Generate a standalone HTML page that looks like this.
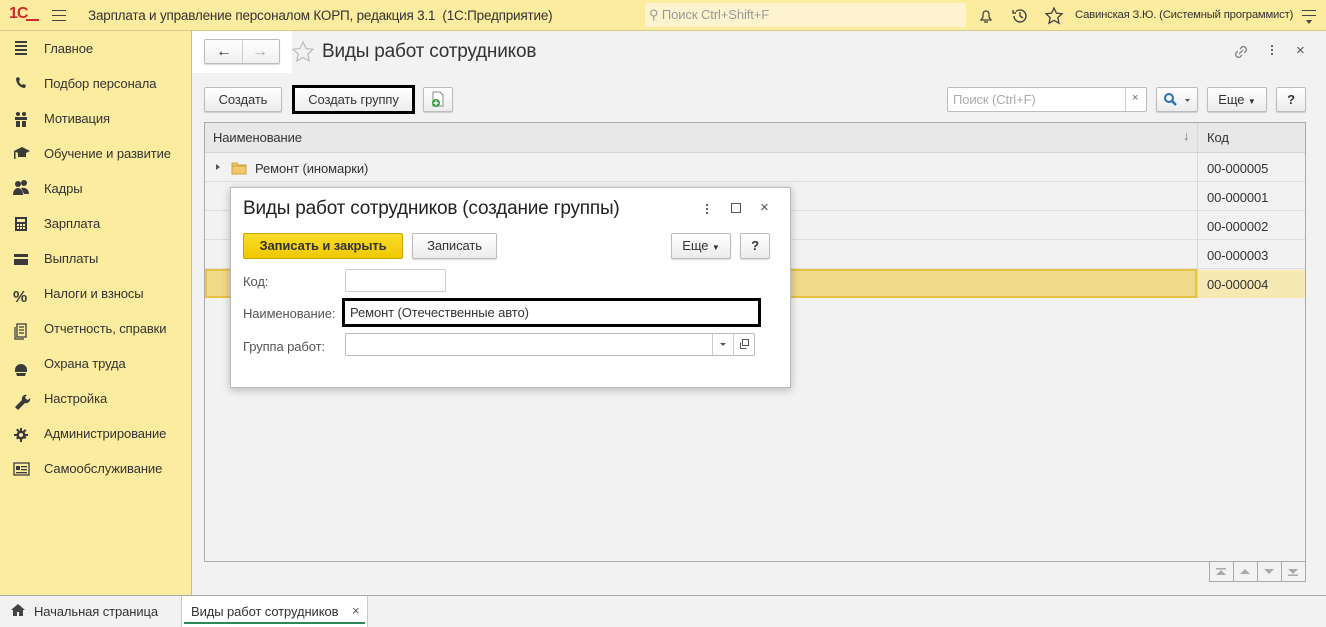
<!DOCTYPE html>
<html><head><meta charset="utf-8"><style>
*{box-sizing:border-box;margin:0;padding:0}
body{width:1326px;height:627px;overflow:hidden;background:#f2f2f2;font-family:"Liberation Sans",Arial,sans-serif;font-size:13px;color:#333;position:relative;letter-spacing:-0.1px}
.a{position:absolute}
.btn{position:absolute;border:1px solid #bcbcbc;border-radius:2px;background:linear-gradient(#fff,#ececec);box-shadow:0 1px 1px rgba(0,0,0,.15);text-align:center;font-size:13px;color:#333}
.side div{position:absolute;left:44px;font-size:13px;color:#333}
.row{position:absolute;left:205px;width:1100px;height:29px;border-bottom:1px solid #ddd}
.code{position:absolute;left:1207px;font-size:13px}
</style></head><body>
<div class="a" style="left:0;top:0;width:1326px;height:31px;background:#fbec9f;border-bottom:1px solid #d8c98a"></div>
<div class="a" style="left:9px;top:5px;color:#d2282e;font-weight:bold;font-size:16px;letter-spacing:-1px">1С</div>
<div class="a" style="left:26px;top:19px;width:13px;height:2px;background:#d2282e"></div>
<div class="a" style="left:52px;top:10px;width:14px;height:1px;background:#444;box-shadow:0 5px 0 #444,0 10px 0 #444"></div>
<div class="a" style="left:88px;top:8px;font-size:13.5px;color:#333;letter-spacing:-0.2px">Зарплата и управление персоналом КОРП, редакция 3.1 &nbsp;(1С:Предприятие)</div>
<div class="a" style="left:645px;top:3px;width:321px;height:24px;background:#fdf4cf;border-radius:2px"></div>
<div class="a" style="left:649px;top:7px;color:#999;font-size:13px">⚲ Поиск Ctrl+Shift+F</div>
<svg class="a" style="left:976px;top:6px" width="20" height="20" viewBox="0 0 20 20" fill="none" stroke="#444" stroke-width="1.3"><path d="M5 14h10l-2-3V8a3 3 0 0 0-6 0v3z"/><path d="M8 16h4"/></svg>
<svg class="a" style="left:1010px;top:6px" width="20" height="20" viewBox="0 0 20 20" fill="none" stroke="#444" stroke-width="1.4"><path d="M4 10a6 6 0 1 0 2-4.5"/><path d="M3 4v3h3"/><path d="M10 6v4l3 2"/></svg>
<svg class="a" style="left:1044px;top:6px" width="20" height="20" viewBox="0 0 20 20" fill="none" stroke="#444" stroke-width="1.3"><path d="M10 2l2.4 5.2 5.6.6-4.2 3.8 1.2 5.6L10 14.4 5 17.2l1.2-5.6L2 7.8l5.6-.6z"/></svg>
<div class="a" style="left:1075px;top:9px;font-size:11.3px;color:#333;letter-spacing:-0.2px;white-space:nowrap">Савинская З.Ю. (Системный программист)</div>
<div class="a" style="left:1302px;top:10px;width:14px;height:1px;background:#444;box-shadow:0 5px 0 #444"></div>
<div class="a" style="left:1306px;top:20px;border:3px solid transparent;border-top:4px solid #444"></div>
<div class="a side" style="left:0;top:31px;width:192px;height:564px;background:#fbec9f;border-right:1px solid #c9bd8a">
<div style="top:10px">Главное</div><div style="top:45px">Подбор персонала</div><div style="top:80px">Мотивация</div><div style="top:115px">Обучение и развитие</div><div style="top:150px">Кадры</div><div style="top:185px">Зарплата</div><div style="top:220px">Выплаты</div><div style="top:255px">Налоги и взносы</div><div style="top:290px">Отчетность, справки</div><div style="top:325px">Охрана труда</div><div style="top:360px">Настройка</div><div style="top:395px">Администрирование</div><div style="top:430px">Самообслуживание</div>
</div>
<svg class="a" style="left:12px;top:40px" width="200" height="450" fill="#3a3a3a">
<rect x="3" y="1" width="12" height="2"/><rect x="3" y="5" width="12" height="2"/><rect x="3" y="9" width="12" height="2"/><rect x="3" y="13" width="12" height="2"/>
<path d="M4 38c0 6 4 10 9 10l1-3-3-1-1 1c-2-1-3-3-3-4l1-1-1-3z"/>
<rect x="3" y="77" width="12" height="3"/><rect x="4" y="81" width="4" height="6"/><rect x="10" y="81" width="4" height="6"/><circle cx="6" cy="74" r="2"/><circle cx="12" cy="74" r="2"/>
<path d="M2 111l8-4 8 4-8 4z"/><rect x="6" y="113" width="8" height="4"/><rect x="2" y="111" width="1.5" height="8"/>
<circle cx="6" cy="144" r="3"/><circle cx="12" cy="143" r="3"/><path d="M1 155c0-5 3-7 5-7s5 2 5 7zM9 148c4-1 8 1 8 6h-5z"/>
<path d="M3 177h12v14H3zM5 179v3h8v-3zM5 184h2v2H5zm3 0h2v2H8zm3 0h2v2h-2zM5 187h2v2H5zm3 0h2v2H8zm3 0h2v2h-2z" fill-rule="evenodd"/>
<rect x="2" y="214" width="14" height="3"/><rect x="2" y="219" width="14" height="6"/>
<text x="1" y="262" font-size="16" font-weight="bold" font-family="Liberation Sans">%</text>
<path d="M5 284h9v13H5z" fill="none" stroke="#3a3a3a" stroke-width="1.3"/><path d="M7 287h5M7 290h5M7 293h5M3 287v12h9" fill="none" stroke="#3a3a3a" stroke-width="1.2"/>
<path d="M3 330a6 6 0 0 1 12 0v2H3zM4 333h10l-1 3H5z"/>
<path d="M3 367l7-7a4 4 0 0 1 5-5l-2 2 1 2 2 1 2-2a4 4 0 0 1-5 5l-7 7z"/>
<circle cx="9" cy="395" r="4.5"/><path d="M8 388h2v14H8zM2 394h14v2H2zM4 390l1.5-1.5 9 9-1.5 1.5zM13 389l1.5 1.5-9 9L4 398z"/><circle cx="9" cy="395" r="2" fill="#fbec9f"/>
<path d="M2 423h15v12H2z" fill="none" stroke="#3a3a3a" stroke-width="1.3"/><rect x="4" y="426" width="4" height="4"/><rect x="9" y="426" width="6" height="1.3"/><rect x="9" y="429" width="6" height="1.3"/><rect x="4" y="432" width="11" height="1.3"/>
</svg>
<div class="a" style="left:192px;top:31px;width:100px;height:42px;background:#fff"></div>
<div class="btn" style="left:204px;top:39px;width:76px;height:25px;background:linear-gradient(#fff,#f0f0f0)"></div>
<div class="a" style="left:242px;top:40px;width:1px;height:23px;background:#ccc"></div>
<div class="a" style="left:216px;top:43px;font-size:16px;color:#333;font-weight:bold">&#8592;</div>
<div class="a" style="left:252px;top:43px;font-size:16px;color:#aaa;font-weight:bold">&#8594;</div>
<svg class="a" style="left:291px;top:40px" width="24" height="24" viewBox="0 0 24 24" fill="none" stroke="#bbb" stroke-width="1.2"><path d="M12 2l3 6.5 7 .8-5.2 4.7 1.5 7L12 17.5 5.7 21l1.5-7L2 9.3l7-.8z"/></svg>
<div class="a" style="left:322px;top:41px;font-size:19px;color:#333;letter-spacing:-0.2px">Виды работ сотрудников</div>
<svg class="a" style="left:1232px;top:43px" width="18" height="18" viewBox="0 0 18 18" fill="none" stroke="#777" stroke-width="1.2"><path d="M8 6l2-2a3 3 0 0 1 4 4l-2 2M10 12l-2 2a3 3 0 0 1-4-4l2-2M7 11l4-4"/></svg>
<div class="a" style="left:1271px;top:45px;width:2px;height:2px;background:#666;box-shadow:0 4px 0 #666,0 8px 0 #666"></div>
<div class="a" style="left:1296px;top:42px;font-size:15px;color:#555">×</div>
<div class="btn" style="left:204px;top:87px;width:78px;height:25px;line-height:23px">Создать</div>
<div class="a" style="left:292px;top:85px;width:123px;height:29px;border:3px solid #000;background:linear-gradient(#fff,#ececec);text-align:center;line-height:23px">Создать группу</div>
<div class="btn" style="left:423px;top:87px;width:30px;height:25px"></div>
<svg class="a" style="left:430px;top:90px" width="16" height="18"><path d="M3 2h7l3 3v11H3z" fill="#fff" stroke="#888"/><circle cx="6" cy="13" r="4" fill="#2e9e3e"/><path d="M6 10.5v5M3.5 13h5" stroke="#fff" stroke-width="1.4"/></svg>
<div class="a" style="left:947px;top:87px;width:200px;height:25px;background:#fff;border:1px solid #bcbcbc;border-radius:2px"></div>
<div class="a" style="left:1125px;top:88px;width:1px;height:23px;background:#ccc"></div>
<div class="a" style="left:953px;top:92px;color:#aaa">Поиск (Ctrl+F)</div>
<div class="a" style="left:1132px;top:92px;color:#666;font-size:11px">×</div>
<div class="btn" style="left:1156px;top:87px;width:42px;height:25px"></div>
<svg class="a" style="left:1163px;top:92px" width="30" height="16"><circle cx="6" cy="6" r="4" fill="none" stroke="#2a6fb5" stroke-width="2"/><path d="M9 9l4 4" stroke="#2a6fb5" stroke-width="2.4"/><path d="M22 7h5l-2.5 3z" fill="#555"/></svg>
<div class="btn" style="left:1207px;top:87px;width:60px;height:25px;line-height:23px">Еще <span style="font-size:8px">▼</span></div>
<div class="btn" style="left:1276px;top:87px;width:30px;height:25px;line-height:23px;font-weight:bold">?</div>
<div class="a" style="left:204px;top:122px;width:1102px;height:440px;border:1px solid #aaa;background:#f2f2f2"></div>
<div class="a" style="left:205px;top:123px;width:1100px;height:30px;background:#e8e8e8;border-bottom:1px solid #d4d4d4"></div>
<div class="a" style="left:1197px;top:123px;width:1px;height:175px;background:#d8d8d8"></div>
<div class="a" style="left:213px;top:130px">Наименование</div>
<div class="a" style="left:1183px;top:128px;color:#777">↓</div>
<div class="a" style="left:1207px;top:130px">Код</div>
<div class="row" style="top:153px"></div><div class="row" style="top:182px"></div><div class="row" style="top:211px"></div><div class="row" style="top:240px"></div>
<div class="a" style="left:205px;top:269px;width:992px;height:29px;background:#efd98a;border:2px solid #e7c243"></div>
<div class="a" style="left:1198px;top:270px;width:107px;height:28px;background:#f7e9b4"></div>
<div class="a" style="left:216px;top:164px;border:3px solid transparent;border-left:4px solid #555"></div>
<svg class="a" style="left:231px;top:161px" width="16" height="14"><path d="M1 2h5l1 2h8v9H1z" fill="#f2c96a" stroke="#d1a23e"/><path d="M1 5h14" stroke="#d1a23e"/></svg>
<div class="a" style="left:255px;top:161px">Ремонт (иномарки)</div>
<div class="code" style="top:161px">00-000005</div><div class="code" style="top:190px">00-000001</div><div class="code" style="top:219px">00-000002</div><div class="code" style="top:248px">00-000003</div><div class="code" style="top:277px">00-000004</div>
<div class="a" style="left:1209px;top:561px;width:97px;height:21px;border:1px solid #aaa;background:#f2f2f2"></div>
<div class="a" style="left:1233px;top:562px;width:1px;height:19px;background:#aaa;box-shadow:24px 0 0 #aaa,48px 0 0 #aaa"></div>
<svg class="a" style="left:1209px;top:562px" width="97" height="19" fill="#aaa"><rect x="7" y="6" width="10" height="1.5"/><path d="M7 13l5-5 5 5z"/><path d="M31 12l5-5 5 5z"/><path d="M55 7l5 5 5-5z"/><path d="M79 7l5 5 5-5z"/><rect x="79" y="12.5" width="10" height="1.5"/></svg>
<div class="a" style="left:0;top:595px;width:1326px;height:32px;background:#f2f2f2;border-top:1px solid #aaa"></div>
<svg class="a" style="left:10px;top:603px" width="16" height="14" fill="#444"><path d="M8 1L1 7h2v6h4V9h2v4h4V7h2z"/></svg>
<div class="a" style="left:34px;top:604px">Начальная страница</div>
<div class="a" style="left:181px;top:596px;width:187px;height:31px;background:#fff;border-left:1px solid #ccc;border-right:1px solid #ccc"></div>
<div class="a" style="left:191px;top:604px">Виды работ сотрудников</div>
<div class="a" style="left:352px;top:603px;color:#555">×</div>
<div class="a" style="left:184px;top:622px;width:181px;height:2px;background:#2b8a57"></div>
<div class="a" style="left:230px;top:187px;width:561px;height:201px;background:#fff;border:1px solid #bbb;box-shadow:0 2px 8px rgba(0,0,0,.25)"></div>
<div class="a" style="left:243px;top:198px;font-size:19px;color:#222;letter-spacing:-0.2px">Виды работ сотрудников (создание группы)</div>
<div class="a" style="left:706px;top:204px;width:2px;height:2px;background:#666;box-shadow:0 4px 0 #666,0 8px 0 #666"></div>
<div class="a" style="left:731px;top:203px;width:10px;height:10px;border:1px solid #555"></div>
<div class="a" style="left:760px;top:199px;font-size:15px;color:#555">×</div>
<div class="a" style="left:243px;top:233px;width:160px;height:26px;background:linear-gradient(#f9dd2a,#f0c800);border:1px solid #c9a500;border-radius:2px;text-align:center;line-height:24px;font-weight:bold;color:#333">Записать и закрыть</div>
<div class="btn" style="left:412px;top:233px;width:85px;height:26px;line-height:24px">Записать</div>
<div class="btn" style="left:671px;top:233px;width:60px;height:26px;line-height:24px">Еще <span style="font-size:8px">▼</span></div>
<div class="btn" style="left:740px;top:233px;width:30px;height:26px;line-height:24px;font-weight:bold">?</div>
<div class="a" style="left:243px;top:274px;color:#555">Код:</div>
<div class="a" style="left:345px;top:269px;width:101px;height:23px;border:1px solid #ccc;border-radius:2px"></div>
<div class="a" style="left:243px;top:306px;color:#555">Наименование:</div>
<div class="a" style="left:342px;top:298px;width:419px;height:29px;border:3px solid #000"></div>
<div class="a" style="left:350px;top:305px">Ремонт (Отечественные авто)</div>
<div class="a" style="left:243px;top:339px;color:#555">Группа работ:</div>
<div class="a" style="left:345px;top:333px;width:410px;height:23px;border:1px solid #bbb;border-radius:2px"></div>
<div class="a" style="left:712px;top:334px;width:1px;height:21px;background:#ccc;box-shadow:21px 0 0 #ccc"></div>
<div class="a" style="left:720px;top:343px;border:3px solid transparent;border-top:3px solid #555"></div>
<svg class="a" style="left:738px;top:338px" width="12" height="12" fill="none" stroke="#555"><rect x="4.5" y="1.5" width="6" height="6"/><path d="M2.5 4.5v6h6"/></svg>
</body></html>
